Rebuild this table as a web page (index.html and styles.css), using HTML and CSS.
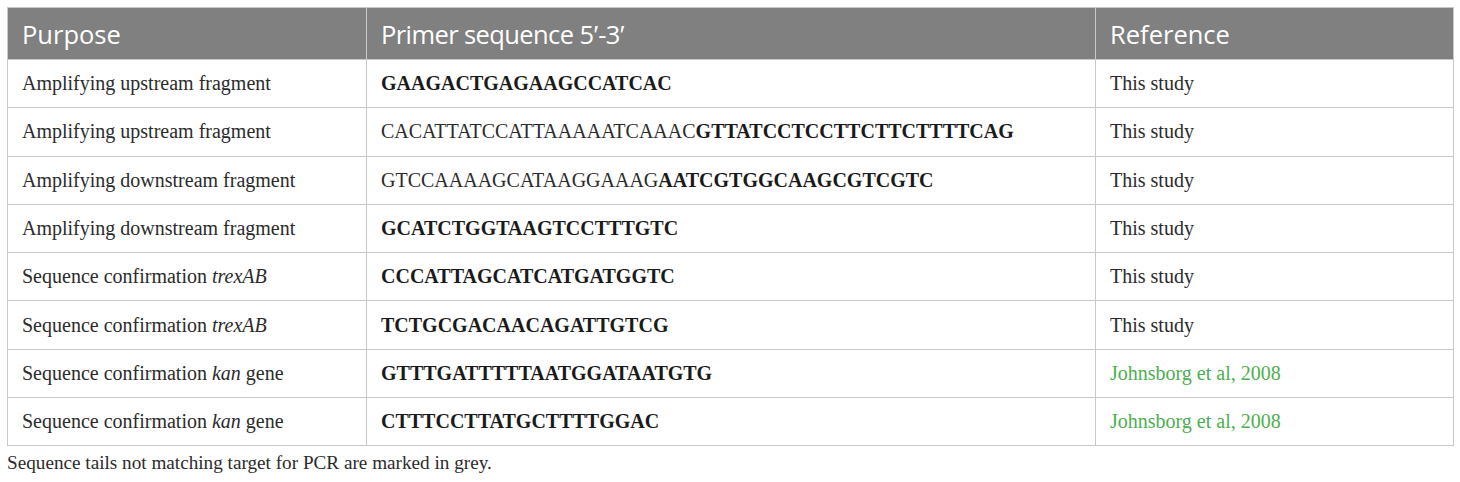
FILE: index.html
```html
<!DOCTYPE html>
<html>
<head>
<meta charset="utf-8">
<link rel="stylesheet" href="styles.css">
</head>
<body>
<div class="wrap">
<table class="primers">
<colgroup><col class="c1"><col class="c2"><col class="c3"></colgroup>
<thead>
<tr><th>Purpose</th><th class="seq">Primer sequence 5<span class="pr">′</span>-3<span class="pr">′</span></th><th>Reference</th></tr>
</thead>
<tbody>
<tr><td>Amplifying upstream fragment</td><td><b>GAAGACTGAGAAGCCATCAC</b></td><td>This study</td></tr>
<tr><td>Amplifying upstream fragment</td><td>CACATTATCCATTAAAAATCAAAC<b>GTTATCCTCCTTCTTCTTTTCAG</b></td><td>This study</td></tr>
<tr><td>Amplifying downstream fragment</td><td>GTCCAAAAGCATAAGGAAAG<b>AATCGTGGCAAGCGTCGTC</b></td><td>This study</td></tr>
<tr><td>Amplifying downstream fragment</td><td><b>GCATCTGGTAAGTCCTTTGTC</b></td><td>This study</td></tr>
<tr><td>Sequence confirmation <i>trexAB</i></td><td><b>CCCATTAGCATCATGATGGTC</b></td><td>This study</td></tr>
<tr><td>Sequence confirmation <i>trexAB</i></td><td><b>TCTGCGACAACAGATTGTCG</b></td><td>This study</td></tr>
<tr><td>Sequence confirmation <i>kan</i> gene</td><td><b>GTTTGATTTTTAATGGATAATGTG</b></td><td><a class="ref" href="#">Johnsborg et al, 2008</a></td></tr>
<tr><td>Sequence confirmation <i>kan</i> gene</td><td><b>CTTTCCTTATGCTTTTGGAC</b></td><td><a class="ref" href="#">Johnsborg et al, 2008</a></td></tr>
</tbody>
</table>
<p class="note">Sequence tails not matching target for PCR are marked in grey.</p>
</div>
</body>
</html>
```
FILE: styles.css
```css
html, body { margin: 0; padding: 0; background: #fff; }
.wrap { padding: 7px 7px 0 7px; }
.primers {
  border-collapse: collapse;
  width: 1446px;
  table-layout: fixed;
  font-family: "Liberation Serif", "Times New Roman", serif;
  font-size: 20px;
  color: #2b2b2b;
}
.c1 { width: 359px; }
.c2 { width: 729px; }
.c3 { width: 358px; }
.primers th {
  background: #7f807f;
  color: #fff;
  font-family: "Open Sans", "Liberation Sans", sans-serif;
  font-weight: 400;
  font-size: 25.5px;
  text-align: left;
  height: 52px;
  padding: 0 14px;
  border: 1px solid #c8c8c8;
  box-sizing: border-box;
}
.primers th.seq { letter-spacing: -0.6px; }
.pr { font-family: "Liberation Sans", sans-serif; letter-spacing: 0; }
.primers td {
  height: 48.3px;
  padding: 0 14px;
  border: 1px solid #c8c8c8;
  box-sizing: border-box;
  vertical-align: middle;
}
.primers b { font-weight: 700; color: #1a1a1a; }
.ref { color: #4caf50; text-decoration: none; }
.note {
  margin: 6px 0 0 0;
  font-family: "Liberation Serif", "Times New Roman", serif;
  font-size: 19.2px;
  color: #2b2b2b;
}
```
